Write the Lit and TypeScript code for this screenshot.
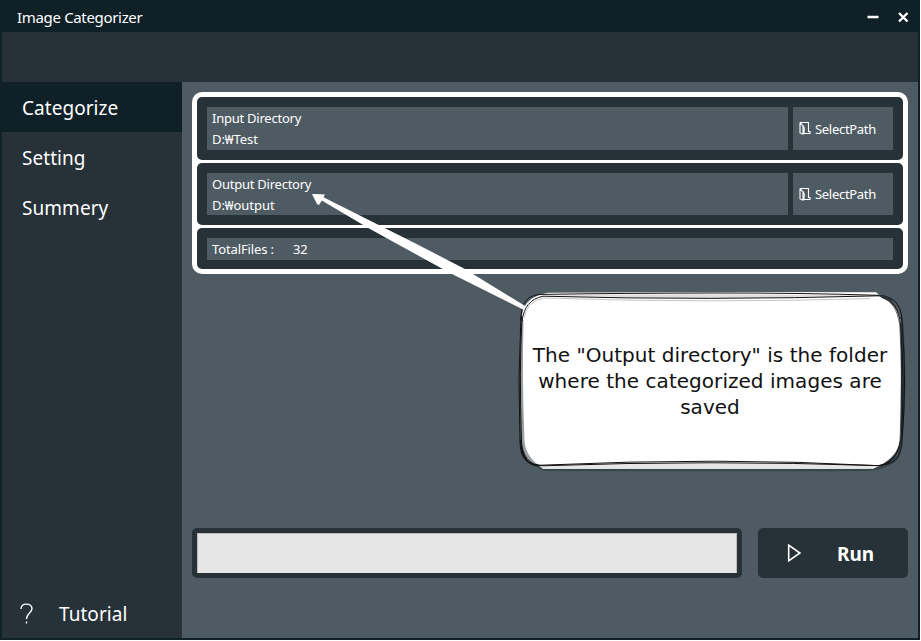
import { LitElement, html, css, svg } from "lit";
import { customElement, property } from "lit/decorators.js";

const folderIcon = svg`<path d="M1 1.5H9.5V10.5H11V12.5H5V10M1 1.5V12L4 13.2V5L1.2 1.8M5 10Q6 7 4 4.5" fill="none" stroke="#fff" stroke-width="1.1"/>`;

@customElement("path-row")
class PathRow extends LitElement {
  @property() label = "";
  @property() path = "";

  static styles = css`
    :host { display: flex; gap: 5px; padding: 10px; box-sizing: border-box; background: #263138; border-radius: 5px; height: 62.5px; }
    .field { flex: 1; background: #4f5b62; padding: 1px 0 0 5px; font-size: 13px; line-height: 21px; white-space: pre; box-sizing: border-box; }
    .label { letter-spacing: -0.24px; }
    .value { letter-spacing: -0.05px; }
    .select { width: 100px; background: #4f5b62; border: 0; padding: 0 0 0 6px; color: #fff; font: inherit; font-size: 13px; letter-spacing: -0.3px; display: flex; align-items: center; gap: 4px; text-align: left; }
    .icon { width: 12px; height: 14px; flex: none; }
    .caption { padding-top: 1px; }
  `;

  render() {
    return html`
      <div class="field"><div class="label">${this.label}</div><div class="value">${this.path}</div></div>
      <button class="select"><svg class="icon" viewBox="0 0 12 14">${folderIcon}</svg><span class="caption">SelectPath</span></button>
    `;
  }
}

@customElement("app-root")
class AppRoot extends LitElement {
  static styles = css`
    :host { display: block; width: 921px; height: 641px; background: #fff; position: relative; overflow: hidden; color: #fff; font-family: "Noto Sans", "Noto Sans CJK KR", sans-serif; }
    .window { width: 920px; height: 640px; box-sizing: border-box; padding: 0 2px 2px; background: #102027; display: flex; flex-direction: column; }
    .title { height: 32px; flex: none; display: flex; align-items: center; padding: 2px 9px 0 15px; box-sizing: border-box; justify-content: space-between; font-size: 15px; }
    .name { letter-spacing: -0.33px; }
    .controls { width: 42px; height: 12px; }
    .band { height: 50px; flex: none; background: #263138; }
    .content { flex: 1; display: flex; min-height: 0; }
    .nav { width: 180px; background: #263138; display: flex; flex-direction: column; }
    .item { height: 50px; padding: 2px 0 0 20px; box-sizing: border-box; line-height: 48px; font-size: 19px; letter-spacing: 0.05px; }
    .active { background: #102027; }
    .help { margin-top: auto; display: flex; align-items: center; padding-left: 18px; gap: 26px; }
    .mark { width: 13px; height: 22px; }
    .main { flex: 1; background: #4f5b62; padding: 10px; display: flex; flex-direction: column; justify-content: space-between; }
    .group { background: #fff; border-radius: 10px; padding: 5px; display: flex; flex-direction: column; gap: 3px; }
    .total { background: #263138; border-radius: 5px; padding: 10px; height: 41px; box-sizing: border-box; }
    .count { background: #4f5b62; height: 21.5px; line-height: 22px; padding-left: 5px; font-size: 13px; display: flex; gap: 19px; letter-spacing: -0.12px; }
    .actions { display: flex; gap: 16px; padding-bottom: 50px; }
    .progress { flex: 1; height: 50px; box-sizing: border-box; padding: 5px; border-radius: 5px; background: #263138; }
    .track { height: 40px; box-sizing: border-box; background: #e6e6e6; border: 1px solid #bcbcbc; border-bottom-color: #e6e6e6; }
    .run { width: 150px; height: 50px; box-sizing: border-box; border: 0; padding: 0 0 0 29px; border-radius: 5px; background: #263138; color: #fff; font: inherit; font-weight: 700; font-size: 19px; display: flex; align-items: center; gap: 36px; }
    .play { width: 14px; height: 18px; }
    .go { padding-top: 2px; }
    .annotation { position: absolute; left: 0; top: 0; width: 921px; height: 641px; pointer-events: none; }
    .note { position: absolute; left: 522px; top: 342px; width: 376px; text-align: center; color: #111; font: 20px/26px "DejaVu Sans", sans-serif; letter-spacing: 0.04px; white-space: pre; }
  `;

  render() {
    return html`
      <div class="window">
        <header class="title">
          <span class="name">Image Categorizer</span>
          <svg class="controls" viewBox="0 0 42 12"><path d="M.5 6H11.5M32 2L40.5 10.5M40.5 2L32 10.5" stroke="#fff" stroke-width="2.4" fill="none"/></svg>
        </header>
        <div class="band"></div>
        <div class="content">
          <nav class="nav">
            <div class="item active">Categorize</div>
            <div class="item">Setting</div>
            <div class="item">Summery</div>
            <div class="item help">
              <svg class="mark" viewBox="0 0 13 22"><path d="M1 6C1 3 3.2 1.1 6.4 1.1S12 3 12 5.6C12 9.8 6.5 10.5 6.5 16M6.5 18.5V20.5" fill="none" stroke="#fff" stroke-width="1.4"/></svg>
              <span>Tutorial</span>
            </div>
          </nav>
          <main class="main">
            <section class="group">
              <path-row label="Input Directory" path="D:₩Test"></path-row>
              <path-row label="Output Directory" path="D:₩output"></path-row>
              <div class="total"><div class="count"><span>TotalFiles :</span><span>32</span></div></div>
            </section>
            <section class="actions">
              <div class="progress"><div class="track"></div></div>
              <button class="run"><svg class="play" viewBox="0 0 14 18"><path d="M1.7 1.2V16.8L12.8 9Z" fill="none" stroke="#fff" stroke-width="1.6"/></svg><span class="go">Run</span></button>
            </section>
          </main>
        </div>
      </div>
      <svg class="annotation" viewBox="0 0 921 641">
        <path d="M530 462Q536 468 545 471Q700 471.5 868 471Q890 469 899 458Q904 445 905.5 380Q905 330 902 315L898 320V455L870 464Z" fill="#39464c"/>
        <path d="M548 292.8Q710 291.5 876 292.3L884 298.5Q896 304 900.5 320L901 370L900.5 440Q897 459 873 468.8H543L538 465Q524 462 522 445L520.5 370L522 315Q524 297 548 292.8Z" fill="#fff"/>
        <path d="M542 295.5Q710 293 870 295.5L710 298.4Z" fill="#dedede"/>
        <path d="M541 466Q600 463 710 463Q800 463 878 466L868 468.8H543Z" fill="#e6e6e6"/>
        <path d="M521 320Q519 380 521 440Q523 461 539 465.5Q525 455 524.5 440Q522 380 523.5 320Z" fill="#9a9fa1"/>
        <g fill="none" stroke="#111" stroke-width="1">
          <path d="M521 320C521 303 527 294.8 542 294.4Q620 293.2 710 293T878 295.3C895 296 902 306 902.2 324Q907 382 902 441C901 459 893 465 877 465.6Q720 457 541 465.2C526 465 520 458 520 440Q517.5 377 521 316"/>
          <path d="M522 321C524 307 530 299 543 296.2Q710 300.7 879 295.8C893 298 899 310 900.5 325Q905 380 901.5 433C900 454 892 465 877 465.6Q710 459.8 542 465.8C529 465 522 455 521.5 441Q519 370 522 317"/>
          <path d="M881 297C892 301 897 309 899.8 325Q903 380 900 440C898 456 890 463 880 465.4" stroke-width=".6"/>
          <path d="M520.5 440Q522 465 538 465.5" stroke-width="1.5"/>
          <path d="M524 318Q527 301 544 298Q710 303.5 870 298.5" stroke="#c5c5c5"/>
        </g>
        <path d="M877 294.5Q890 296 896 302Q890 299.5 884 299Z" fill="#26343a"/>
        <path d="M312 194Q320 193.8 325 194.5L323.5 197.2L415 243.2L464 268.5L526 306.5L524 310L450 273L370 229L321.8 200.5L319 205L317 204Z" fill="#fff"/>
      </svg>
      <div class="note">The "Output directory" is the folder
where the categorized images are
saved</div>
    `;
  }
}
